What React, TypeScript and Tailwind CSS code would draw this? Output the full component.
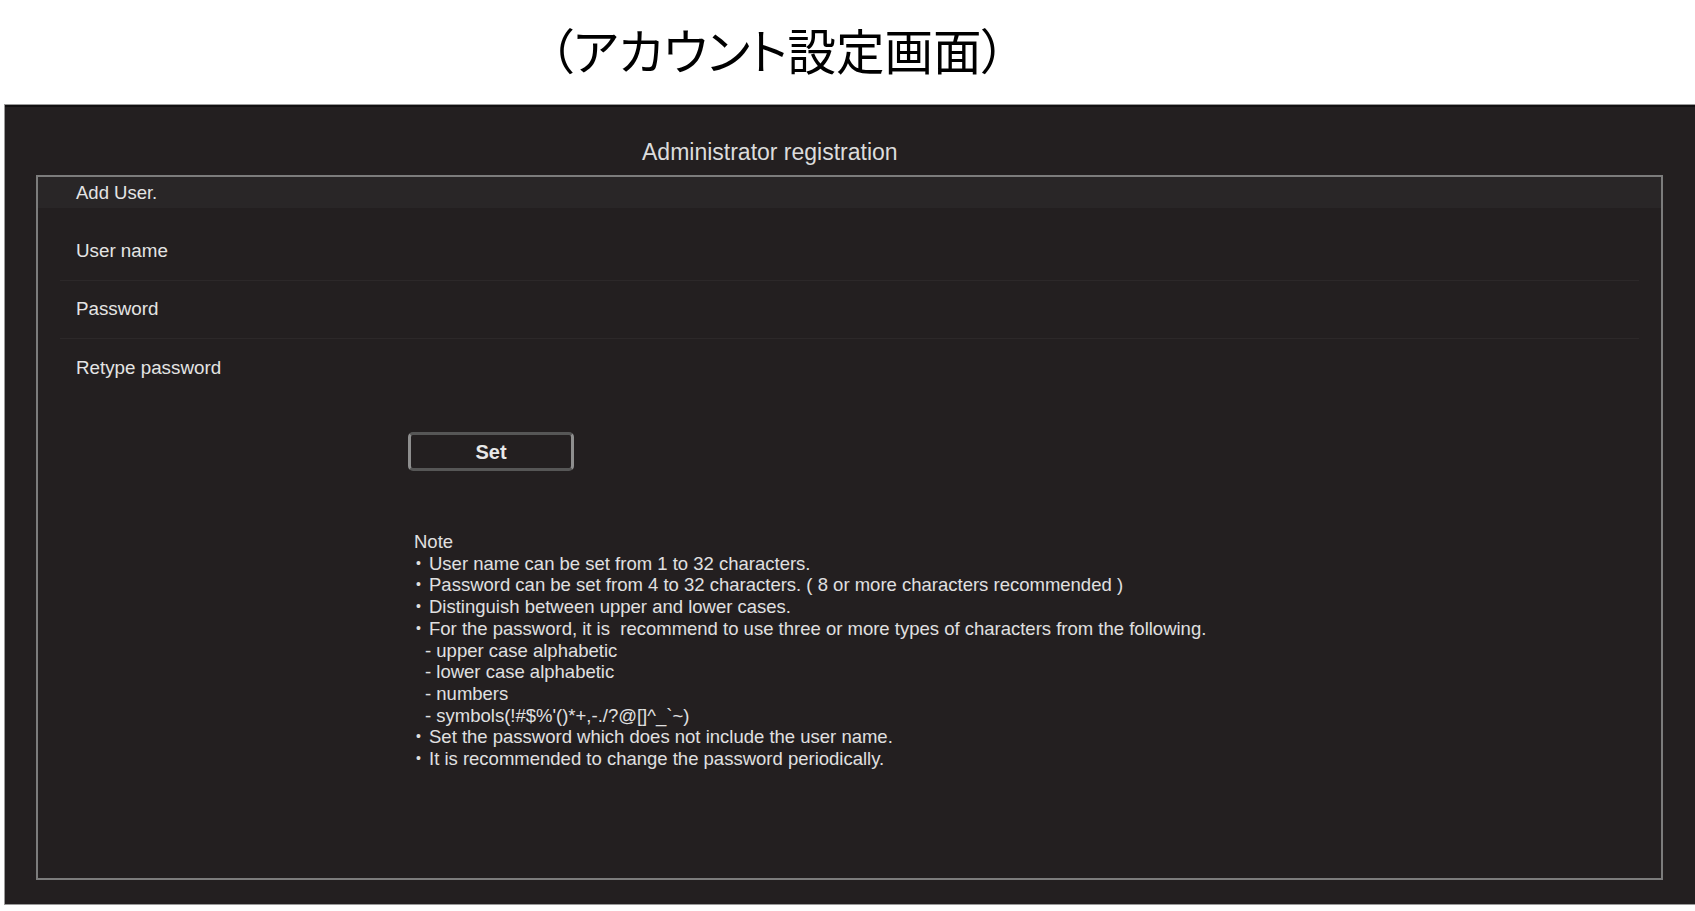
import React from 'react';

const rows = ['User name', 'Password', 'Retype password'];

const notes: { text: string; bullet: boolean }[] = [
  { text: 'User name can be set from 1 to 32 characters.', bullet: true },
  { text: 'Password can be set from 4 to 32 characters. ( 8 or more characters recommended )', bullet: true },
  { text: 'Distinguish between upper and lower cases.', bullet: true },
  { text: 'For the password, it is  recommend to use three or more types of characters from the following.', bullet: true },
  { text: '- upper case alphabetic', bullet: false },
  { text: '- lower case alphabetic', bullet: false },
  { text: '- numbers', bullet: false },
  { text: "- symbols(!#$%'()*+,-./?@[]^_`~)", bullet: false },
  { text: 'Set the password which does not include the user name.', bullet: true },
  { text: 'It is recommended to change the password periodically.', bullet: true }
];

export default function App() {
  return (
    <div className="w-[1695px] h-[911px] bg-white overflow-hidden font-['Liberation_Sans',Arial,sans-serif]">
      {/* Caption */}
      <div className="h-[104px] pt-[21px] pl-[549px]">
        <h1 className="text-[48.5px] leading-[56px] text-black font-['Noto_Sans_CJK_JP',sans-serif] [font-feature-settings:'palt'] whitespace-pre">
          （アカウント設定画面）
        </h1>
      </div>

      {/* Screen */}
      <div className="ml-[4px] h-[801px] bg-[#231f20] border-t border-l border-b border-[#9a9a9a] flex flex-col">
        <div className="h-[2px] bg-[#121011]" />
        <div className="pt-[32px] pl-[637px] h-[68px]">
          <h2 className="text-[23px] leading-[26px] text-[#dcdcdc] whitespace-pre">Administrator registration</h2>
        </div>

        <div className="ml-[31px] w-[1627px] h-[705px] border-2 border-[#7c7c7c] flex flex-col">
          <div className="h-[31px] bg-[#292627] flex items-center pl-[38px]">
            <span className="text-[18.5px] text-[#e4e4e4]">Add User.</span>
          </div>

          <div className="mt-[15px] mx-[22px]">
            {rows.map((label, i) => (
              <div
                key={label}
                className={`h-[58px] flex items-center pl-[16px] ${i < rows.length - 1 ? 'border-b border-[#2c2829]' : ''}`}
              >
                <span className="text-[18.8px] text-[#e4e4e4]">{label}</span>
              </div>
            ))}
          </div>

          <div className="mt-[35px] pl-[370px]">
            <button className="w-[166px] h-[39px] rounded-[5px] border-y-[3px] border-y-[#565656] border-x-[3px] border-x-[#8e8e8e] text-[20px] font-bold text-[#e8e8e8] flex items-center justify-center">
              Set
            </button>
          </div>

          <div className="mt-[60px] pl-[376px] text-[18.5px] leading-[21.7px] text-[#e0e0e0]">
            <div>Note</div>
            {notes.map(n => (
              <div key={n.text} className="flex whitespace-pre">
                {n.bullet ? (
                  <>
                    <span className="w-[15px] pl-[2px] text-[14px]">•</span>
                    <span>{n.text}</span>
                  </>
                ) : (
                  <span className="pl-[11px]">{n.text}</span>
                )}
              </div>
            ))}
          </div>
        </div>
      </div>
    </div>
  );
}
